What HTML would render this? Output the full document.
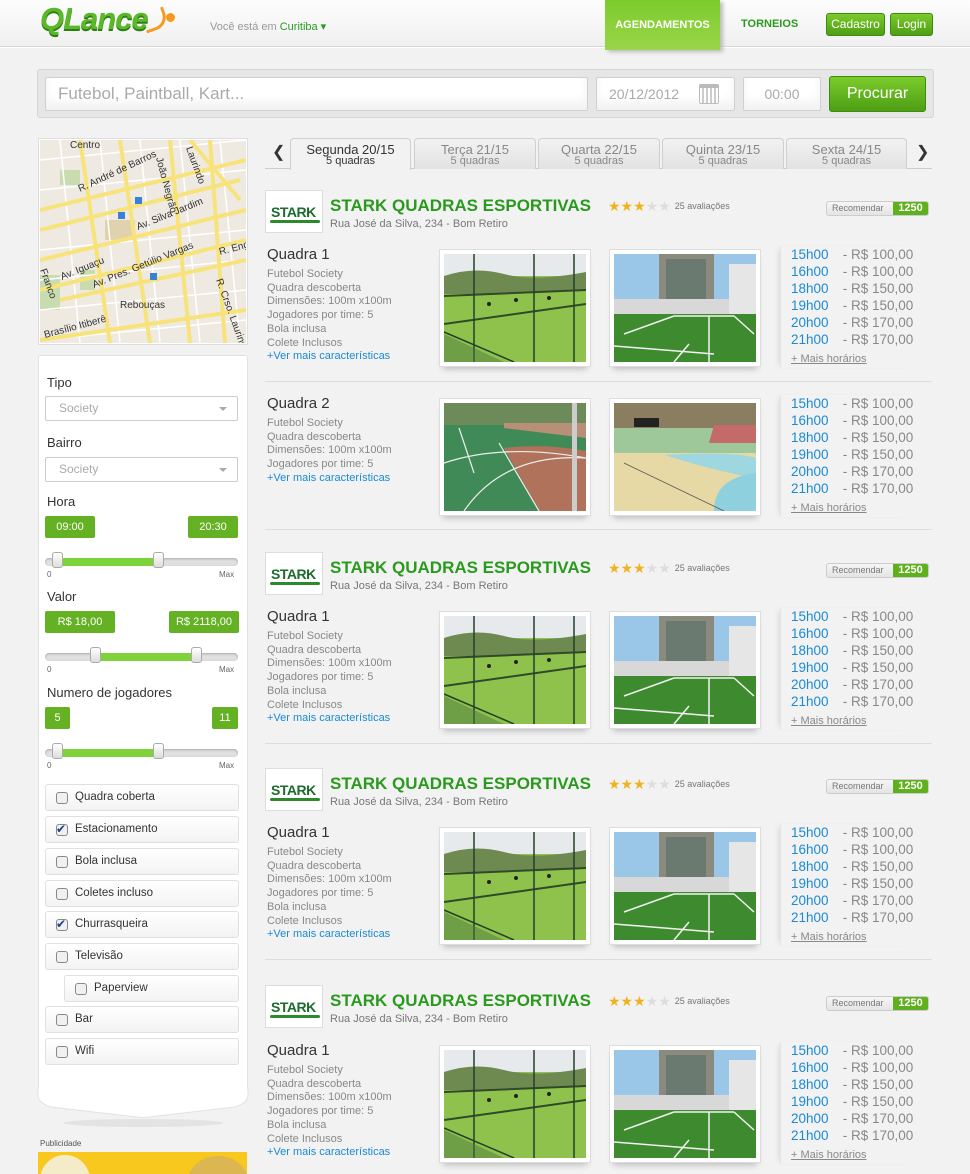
<!DOCTYPE html>
<html><head><meta charset="utf-8"><style>
*{margin:0;padding:0;box-sizing:border-box}
body{width:970px;height:1174px;overflow:hidden;background:#f3f2f2;font-family:"Liberation Sans",sans-serif;position:relative;color:#333}
.a{position:absolute}
#hdr{left:0;top:0;width:970px;height:47px;background:linear-gradient(#fdfdfd,#f0f0f0);border-bottom:1px solid #d8d8d8;box-shadow:0 1px 0 #fff}
.btn{background:linear-gradient(#7ccb2c,#4d9e14);color:#fff;border-radius:3px;font-size:12px;text-align:center;border:1px solid #3f8a10}
.srch{border:1px solid #d0d0d0;background:#fff;border-radius:2px;color:#aaa;box-shadow:inset 0 -8px 10px #f2f2f2}
.tab{top:138px;height:31px;background:linear-gradient(#f2f2f2,#e2e2e2);border:1px solid #cfcfcf;border-bottom:none;border-radius:4px 4px 0 0;text-align:center;color:#888;font-size:13px;line-height:13px;padding-top:4px}
.tab small{display:block;font-size:11px;line-height:11px}
.logo{width:58px;height:43px;background:#fff;border:1px solid #ddd}
.logo b{position:absolute;left:5px;top:13px;font-size:14px;color:#1b6b2c;font-weight:bold;letter-spacing:-0.5px}
.logo i{position:absolute;left:4px;top:29px;width:50px;height:3px;background:#2b8a2b;border-radius:2px}
.ttl{font-size:17px;font-weight:bold;color:#2a9a1e;white-space:nowrap}
.adr{font-size:11px;color:#777;white-space:nowrap}
.stars{font-size:14px;color:#f2b21c;letter-spacing:0px;white-space:nowrap}
.stars span{color:#ddd}
.stars em{font-style:normal;color:#777;font-size:9px;letter-spacing:0;margin-left:4px;vertical-align:2px}
.rec{width:103px;height:15px;border:1px solid #ccc;border-radius:3px;background:linear-gradient(#f6f6f6,#e4e4e4);font-size:9px;color:#777;line-height:13px;padding-left:5px;overflow:hidden}
.rec b{position:absolute;right:0;top:0;height:13px;width:35px;background:#5fb01d;color:#fff;font-size:11px;text-align:center}
.qn{font-size:15px;color:#333;white-space:nowrap}
.ft{font-size:11px;color:#888;line-height:13.7px;white-space:nowrap}
.ft a{color:#1a8ad4;text-decoration:none}
.ph{width:152px;height:118px;background:#fff;border:1px solid #ddd;padding:4px;box-shadow:0 6px 6px -4px #bbb}
.ph svg{display:block;width:142px;height:108px}
.tm{font-size:13.5px;line-height:17.1px;color:#888;white-space:nowrap;border-left:1px solid #e4e4e4;padding-left:10px;box-shadow:-4px 0 6px -4px #ccc}
.tm b{color:#1a8ad4;font-weight:normal;display:inline-block;width:48px}
.tm u{font-size:11px;color:#888}
.sep{left:265px;width:667px;height:1px;background:#ddd}
.lb{font-size:13px;color:#333}
.sel{width:193px;height:25px;border:1px solid #ccc;background:#fff;border-radius:2px;color:#aaa;font-size:12px;line-height:23px;padding-left:13px}
.sel:after{content:"";position:absolute;right:10px;top:10px;border:4px solid transparent;border-top-color:#aaa}
.gv{height:22px;background:#64b123;color:#fff;font-size:11px;line-height:22px;text-align:center;border-radius:2px}
.sl{width:193px;height:8px;border-radius:4px;background:#e0e0e0;box-shadow:inset 0 1px 2px #aaa}
.sl i{position:absolute;top:0;height:8px;background:#7ed23a}
.kn{position:absolute;top:-6px;width:11px;height:16px;border:1px solid #aaa;border-radius:3px;background:linear-gradient(#fff,#ddd)}
.tk{font-size:8px;color:#666}
.cb{width:194px;height:27px;border:1px solid #e0e0e0;background:linear-gradient(#fff,#f3f3f3);border-radius:3px;font-size:11.5px;color:#333;line-height:25px;padding-left:29px}
.cb:before{content:"";position:absolute;left:10px;top:7px;width:10px;height:10px;border:1px solid #888;border-radius:3px;background:#f0f0f0}
.cb.on:after{content:"✔";position:absolute;left:10px;top:0px;color:#1b3f8a;font-size:12px}
</style></head><body>
<svg width="0" height="0" style="position:absolute">
<defs>
<symbol id="p1" viewBox="0 0 142 108"><rect width="142" height="108" fill="#8fc24c"/><rect width="142" height="22" fill="#e6eaec"/><path d="M0 22 Q30 12 60 20 T142 18 V40 H0Z" fill="#6f8a50"/><path d="M0 42 L142 36 V108 H0Z" fill="#8fc24c"/><path d="M0 70 L142 50 M0 42 L142 36" stroke="#2f4a2a" stroke-width="2"/><path d="M0 78 L70 108 M30 0 V108 M90 0 V108 M130 0 V108" stroke="#24402a" stroke-width="1.5"/><path d="M0 80 L60 108 H0Z" fill="#4d7a40" opacity=".5"/><circle cx="45" cy="50" r="2" fill="#222"/><circle cx="72" cy="46" r="2" fill="#222"/><circle cx="105" cy="44" r="2" fill="#222"/></symbol>
<symbol id="p2" viewBox="0 0 142 108"><rect width="142" height="108" fill="#9ac7e8"/><rect x="45" y="0" width="55" height="60" fill="#8a8a7e"/><rect x="52" y="5" width="40" height="50" fill="#6b7a70"/><rect x="0" y="45" width="142" height="15" fill="#d8d8d8"/><rect x="115" y="10" width="27" height="50" fill="#e6e6e6"/><path d="M0 60 H142 V108 H0Z" fill="#3e8a2e"/><path d="M10 80 L60 62 M60 62 H120 M95 62 V108 M0 92 L100 100 M120 62 L140 80 M75 90 L60 108" stroke="#f2f2f2" stroke-width="1.5" fill="none"/></symbol>
<symbol id="p3" viewBox="0 0 142 108"><rect width="142" height="108" fill="#3f8a56"/><rect width="142" height="22" fill="#6d8a5a"/><path d="M60 20 H142 V35 L60 25Z" fill="#b89078"/><path d="M60 45 Q100 40 142 48 V108 H95 Z" fill="#b0725a"/><path d="M0 60 Q60 40 142 55 M15 25 L30 70 M55 40 L95 108 M20 108 Q60 50 142 55" stroke="#eee" stroke-width="1.2" fill="none"/><rect x="128" y="0" width="5" height="108" fill="#ccc"/></symbol>
<symbol id="p4" viewBox="0 0 142 108"><rect width="142" height="108" fill="#e6d9a5"/><rect width="142" height="30" fill="#8b7d60"/><rect x="0" y="25" width="142" height="25" fill="#9ec89a"/><path d="M100 22 H142 V40 H95Z" fill="#c56a6a"/><rect x="20" y="15" width="25" height="9" fill="#222"/><path d="M50 52 Q120 48 142 55 V75 Q110 70 60 55Z" fill="#9ed7e0"/><path d="M100 108 Q100 75 142 70 V108Z" fill="#8fd0de"/><path d="M10 60 L110 108" stroke="#555" stroke-width=".8"/></symbol>
</defs></svg>

<div id="hdr" class="a"></div>
<div class="a" style="left:40px;top:1px;font-size:31px;font-weight:bold;font-style:italic;color:#5bb82a;letter-spacing:-1px;text-shadow:0 2px 0 #2e7d12,0 0 2px #fff">QLance</div>
<div class="a" style="left:143px;top:10px;width:24px;height:20px;border:3px solid #f59a1e;border-left:none;border-top:none;border-radius:0 0 14px 0;transform:rotate(-20deg)"></div>
<div class="a" style="left:166px;top:13px;width:9px;height:9px;border-radius:50%;background:#f59a1e"></div>
<div class="a" style="left:210px;top:20px;font-size:11px;color:#999">Você está em <span style="color:#2a9a1e">Curitiba ▾</span></div>
<div class="a" style="left:605px;top:0;width:115px;height:50px;background:linear-gradient(#7ccb2c,#9ad54a);color:#fff;font-size:11px;font-weight:bold;text-align:center;line-height:50px;box-shadow:3px 2px 4px #bbb">AGENDAMENTOS</div>
<div class="a" style="left:741px;top:18px;font-size:11px;font-weight:bold;color:#2a9a1e">TORNEIOS</div>
<div class="a btn" style="left:826px;top:13px;width:59px;height:23px;line-height:21px">Cadastro</div>
<div class="a btn" style="left:890px;top:13px;width:43px;height:23px;line-height:21px">Login</div>

<div class="a" style="left:37px;top:69px;width:897px;height:49px;background:#e6e6e6;border:1px solid #d6d6d6;border-radius:3px"></div>
<div class="a srch" style="left:45px;top:77px;width:543px;height:34px;font-size:17px;line-height:32px;padding-left:12px">Futebol, Paintball, Kart...</div>
<div class="a srch" style="left:596px;top:77px;width:139px;height:34px;font-size:14px;line-height:32px;padding-left:12px">20/12/2012</div>
<div class="a" style="left:699px;top:84px;width:20px;height:20px;border:1px solid #bbb;border-radius:2px;background:repeating-linear-gradient(90deg,#fff 0 2px,#ccc 2px 4px);border-top:4px solid #bbb"></div>
<div class="a srch" style="left:743px;top:77px;width:78px;height:34px;font-size:14px;line-height:32px;text-align:center">00:00</div>
<div class="a btn" style="left:829px;top:76px;width:97px;height:36px;line-height:34px;font-size:16px">Procurar</div>

<div class="a" style="left:38px;top:138px;width:210px;height:207px;border:1px solid #ddd;background:#fff;padding:1px">
<svg width="206" height="203" viewBox="0 0 206 203" style="display:block">
<rect width="206" height="203" fill="#eeeae2"/>
<rect x="65" y="80" width="30" height="20" fill="#e0d2ae"/><rect x="20" y="30" width="20" height="15" fill="#c8dcb0"/><rect x="0" y="135" width="20" height="35" fill="#c8dcb0"/><rect x="40" y="130" width="15" height="20" fill="#c8dcb0"/>
<g stroke="#fff" stroke-width="1.5"><path d="M0 20 L206 0 M0 50 L206 30 M0 110 L206 90 M0 140 L206 120 M0 170 L206 150 M20 0 L40 203 M60 0 L80 203 M100 0 L120 203 M140 0 L160 203 M180 0 L200 203 M0 200 L206 180"/></g>
<g stroke="#f7e37a" stroke-width="4" fill="none"><path d="M0 70 L206 20 M0 120 L206 70 M0 90 L200 40 M20 160 L206 120 M0 200 L206 170 M0 150 L206 100 M80 0 L110 203 M130 0 L150 203 M170 0 L185 203 M150 0 L200 60 M40 0 L70 203"/></g>
<g font-size="10" fill="#333" font-family="Liberation Sans,sans-serif"><text x="30" y="8">Centro</text><text x="40" y="52" transform="rotate(-25 40 52)">R. André de Barros</text><text x="116" y="18" transform="rotate(75 116 18)">João Negrão</text><text x="98" y="90" transform="rotate(-22 98 90)">Av. Silva Jardim</text><text x="54" y="148" transform="rotate(-22 54 148)">Av. Pres. Getúlio Vargas</text><text x="22" y="140" transform="rotate(-22 22 140)">Av. Iguaçu</text><text x="80" y="168">Rebouças</text><text x="5" y="198" transform="rotate(-15 5 198)">Brasílio Itiberê</text><text x="180" y="115" transform="rotate(-15 180 115)">R. Eng.</text><text x="176" y="140" transform="rotate(70 176 140)">R. Crso. Laurindo</text><text x="0" y="130" transform="rotate(70 0 130)">Franco</text><text x="146" y="8" transform="rotate(70 146 8)">Laurindo</text></g>
<rect x="95" y="57" width="7" height="7" fill="#3a7fd8"/><rect x="78" y="72" width="7" height="7" fill="#3a7fd8"/><rect x="110" y="133" width="7" height="7" fill="#3a7fd8"/>
</svg></div>

<div class="a" style="left:38px;top:355px;width:210px;height:735px;background:#fff;border:1px solid #e2e2e2;border-bottom:none;border-radius:3px 3px 0 0"></div>
<svg class="a" style="left:37px;top:1089px" width="212" height="40"><path d="M1 0 V6 Q1 14 14 18 L100 28 Q106 29 112 28 L198 18 Q211 14 211 6 V0" fill="#fff" stroke="#e2e2e2"/><ellipse cx="106" cy="34" rx="80" ry="4" fill="#ddd" opacity=".7"/></svg>
<div class="a lb" style="left:47px;top:375px">Tipo</div>
<div class="a sel" style="left:45px;top:396px">Society</div>
<div class="a lb" style="left:47px;top:435px">Bairro</div>
<div class="a sel" style="left:45px;top:457px">Society</div>
<div class="a lb" style="left:47px;top:494px">Hora</div>
<div class="a gv" style="left:45px;top:516px;width:50px">09:00</div>
<div class="a gv" style="left:188px;top:516px;width:50px">20:30</div>
<div class="a sl" style="left:45px;top:558px"><i style="left:10px;width:105px"></i><span class="kn" style="left:7px"></span><span class="kn" style="left:108px"></span></div>
<div class="a tk" style="left:47px;top:570px">0</div><div class="a tk" style="left:219px;top:570px">Max</div>
<div class="a lb" style="left:47px;top:589px">Valor</div>
<div class="a gv" style="left:45px;top:611px;width:70px">R$ 18,00</div>
<div class="a gv" style="left:169px;top:611px;width:70px">R$ 2118,00</div>
<div class="a sl" style="left:45px;top:653px"><i style="left:55px;width:100px"></i><span class="kn" style="left:45px"></span><span class="kn" style="left:146px"></span></div>
<div class="a tk" style="left:47px;top:665px">0</div><div class="a tk" style="left:219px;top:665px">Max</div>
<div class="a lb" style="left:47px;top:685px">Numero de jogadores</div>
<div class="a gv" style="left:45px;top:707px;width:25px">5</div>
<div class="a gv" style="left:212px;top:707px;width:26px">11</div>
<div class="a sl" style="left:45px;top:749px"><i style="left:10px;width:105px"></i><span class="kn" style="left:7px"></span><span class="kn" style="left:108px"></span></div>
<div class="a tk" style="left:47px;top:761px">0</div><div class="a tk" style="left:219px;top:761px">Max</div>
<div class="a cb" style="left:45px;top:784px">Quadra coberta</div>
<div class="a cb on" style="left:45px;top:816px">Estacionamento</div>
<div class="a cb" style="left:45px;top:848px">Bola inclusa</div>
<div class="a cb" style="left:45px;top:880px">Coletes incluso</div>
<div class="a cb on" style="left:45px;top:911px">Churrasqueira</div>
<div class="a cb" style="left:45px;top:943px">Televisão</div>
<div class="a cb" style="left:64px;top:975px;width:175px">Paperview</div>
<div class="a cb" style="left:45px;top:1006px">Bar</div>
<div class="a cb" style="left:45px;top:1038px">Wifi</div>
<div class="a" style="left:40px;top:1139px;font-size:8px;color:#555">Publicidade</div>
<div class="a" style="left:38px;top:1152px;width:209px;height:22px;background:#f8c81e;overflow:hidden"><div class="a" style="left:2px;top:3px;width:50px;height:50px;border-radius:50%;background:#f4ecc8"></div><div class="a" style="left:150px;top:4px;width:60px;height:50px;border-radius:50%;background:#dcb650"></div></div>

<div class="a" style="left:272px;top:142px;font-size:16px;color:#333">❮</div>
<div class="a" style="left:916px;top:142px;font-size:16px;color:#333">❯</div>
<div class="a sep" style="top:168px;background:#ccc"></div>
<div class="a tab" style="left:290px;width:121px;background:#f3f2f2;color:#333;height:32px">Segunda 20/15<small>5 quadras</small></div>
<div class="a tab" style="left:414px;width:122px">Terça 21/15<small>5 quadras</small></div>
<div class="a tab" style="left:538px;width:122px">Quarta 22/15<small>5 quadras</small></div>
<div class="a tab" style="left:662px;width:122px">Quinta 23/15<small>5 quadras</small></div>
<div class="a tab" style="left:786px;width:121px">Sexta 24/15<small>5 quadras</small></div>

<div class="a" style="left:265px;top:190px;width:668px;height:45px">
<div class="a logo" style="left:0;top:0"><b>STARK</b><i></i></div>
<div class="a ttl" style="left:65px;top:6px">STARK QUADRAS ESPORTIVAS</div>
<div class="a adr" style="left:65px;top:28px">Rua José da Silva, 234 - Bom Retiro</div>
<div class="a stars" style="left:343px;top:8px">★★★<span>★★</span><em>25 avaliações</em></div>
<div class="a rec" style="left:561px;top:11px">Recomendar<b>1250</b></div>
</div>
<div class="a" style="left:265px;top:249px;width:668px;height:120px">
<div class="a qn" style="left:2px;top:-3px">Quadra 1</div>
<div class="a ft" style="left:2px;top:19px">Futebol Society<br>Quadra descoberta<br>Dimensões: 100m x100m<br>Jogadores por time: 5<br>Bola inclusa<br>Colete Inclusos<br><a>+Ver mais características</a></div>
<div class="a ph" style="left:174px;top:0"><svg><use href="#p1"/></svg></div>
<div class="a ph" style="left:344px;top:0"><svg><use href="#p2"/></svg></div>
<div class="a tm" style="left:515px;top:-3px"><b>15h00</b> - R$ 100,00<br><b>16h00</b> - R$ 100,00<br><b>18h00</b> - R$ 150,00<br><b>19h00</b> - R$ 150,00<br><b>20h00</b> - R$ 170,00<br><b>21h00</b> - R$ 170,00<br><u>+ Mais horários</u></div>
</div>
<div class="a sep" style="top:381px"></div>
<div class="a" style="left:265px;top:398px;width:668px;height:120px">
<div class="a qn" style="left:2px;top:-3px">Quadra 2</div>
<div class="a ft" style="left:2px;top:19px">Futebol Society<br>Quadra descoberta<br>Dimensões: 100m x100m<br>Jogadores por time: 5<br><a>+Ver mais características</a></div>
<div class="a ph" style="left:174px;top:0"><svg><use href="#p3"/></svg></div>
<div class="a ph" style="left:344px;top:0"><svg><use href="#p4"/></svg></div>
<div class="a tm" style="left:515px;top:-3px"><b>15h00</b> - R$ 100,00<br><b>16h00</b> - R$ 100,00<br><b>18h00</b> - R$ 150,00<br><b>19h00</b> - R$ 150,00<br><b>20h00</b> - R$ 170,00<br><b>21h00</b> - R$ 170,00<br><u>+ Mais horários</u></div>
</div>
<div class="a sep" style="top:529px"></div>

<div class="a" style="left:265px;top:552px;width:668px;height:45px">
<div class="a logo" style="left:0;top:0"><b>STARK</b><i></i></div>
<div class="a ttl" style="left:65px;top:6px">STARK QUADRAS ESPORTIVAS</div>
<div class="a adr" style="left:65px;top:28px">Rua José da Silva, 234 - Bom Retiro</div>
<div class="a stars" style="left:343px;top:8px">★★★<span>★★</span><em>25 avaliações</em></div>
<div class="a rec" style="left:561px;top:11px">Recomendar<b>1250</b></div>
</div>
<div class="a" style="left:265px;top:611px;width:668px;height:120px">
<div class="a qn" style="left:2px;top:-3px">Quadra 1</div>
<div class="a ft" style="left:2px;top:19px">Futebol Society<br>Quadra descoberta<br>Dimensões: 100m x100m<br>Jogadores por time: 5<br>Bola inclusa<br>Colete Inclusos<br><a>+Ver mais características</a></div>
<div class="a ph" style="left:174px;top:0"><svg><use href="#p1"/></svg></div>
<div class="a ph" style="left:344px;top:0"><svg><use href="#p2"/></svg></div>
<div class="a tm" style="left:515px;top:-3px"><b>15h00</b> - R$ 100,00<br><b>16h00</b> - R$ 100,00<br><b>18h00</b> - R$ 150,00<br><b>19h00</b> - R$ 150,00<br><b>20h00</b> - R$ 170,00<br><b>21h00</b> - R$ 170,00<br><u>+ Mais horários</u></div>
</div>
<div class="a sep" style="top:743px"></div>

<div class="a" style="left:265px;top:768px;width:668px;height:45px">
<div class="a logo" style="left:0;top:0"><b>STARK</b><i></i></div>
<div class="a ttl" style="left:65px;top:6px">STARK QUADRAS ESPORTIVAS</div>
<div class="a adr" style="left:65px;top:28px">Rua José da Silva, 234 - Bom Retiro</div>
<div class="a stars" style="left:343px;top:8px">★★★<span>★★</span><em>25 avaliações</em></div>
<div class="a rec" style="left:561px;top:11px">Recomendar<b>1250</b></div>
</div>
<div class="a" style="left:265px;top:827px;width:668px;height:120px">
<div class="a qn" style="left:2px;top:-3px">Quadra 1</div>
<div class="a ft" style="left:2px;top:19px">Futebol Society<br>Quadra descoberta<br>Dimensões: 100m x100m<br>Jogadores por time: 5<br>Bola inclusa<br>Colete Inclusos<br><a>+Ver mais características</a></div>
<div class="a ph" style="left:174px;top:0"><svg><use href="#p1"/></svg></div>
<div class="a ph" style="left:344px;top:0"><svg><use href="#p2"/></svg></div>
<div class="a tm" style="left:515px;top:-3px"><b>15h00</b> - R$ 100,00<br><b>16h00</b> - R$ 100,00<br><b>18h00</b> - R$ 150,00<br><b>19h00</b> - R$ 150,00<br><b>20h00</b> - R$ 170,00<br><b>21h00</b> - R$ 170,00<br><u>+ Mais horários</u></div>
</div>
<div class="a sep" style="top:959px"></div>

<div class="a" style="left:265px;top:985px;width:668px;height:45px">
<div class="a logo" style="left:0;top:0"><b>STARK</b><i></i></div>
<div class="a ttl" style="left:65px;top:6px">STARK QUADRAS ESPORTIVAS</div>
<div class="a adr" style="left:65px;top:28px">Rua José da Silva, 234 - Bom Retiro</div>
<div class="a stars" style="left:343px;top:8px">★★★<span>★★</span><em>25 avaliações</em></div>
<div class="a rec" style="left:561px;top:11px">Recomendar<b>1250</b></div>
</div>
<div class="a" style="left:265px;top:1045px;width:668px;height:129px">
<div class="a qn" style="left:2px;top:-3px">Quadra 1</div>
<div class="a ft" style="left:2px;top:19px">Futebol Society<br>Quadra descoberta<br>Dimensões: 100m x100m<br>Jogadores por time: 5<br>Bola inclusa<br>Colete Inclusos<br><a>+Ver mais características</a></div>
<div class="a ph" style="left:174px;top:0"><svg><use href="#p1"/></svg></div>
<div class="a ph" style="left:344px;top:0"><svg><use href="#p2"/></svg></div>
<div class="a tm" style="left:515px;top:-3px"><b>15h00</b> - R$ 100,00<br><b>16h00</b> - R$ 100,00<br><b>18h00</b> - R$ 150,00<br><b>19h00</b> - R$ 150,00<br><b>20h00</b> - R$ 170,00<br><b>21h00</b> - R$ 170,00<br><u>+ Mais horários</u></div>
</div>
</body></html>
